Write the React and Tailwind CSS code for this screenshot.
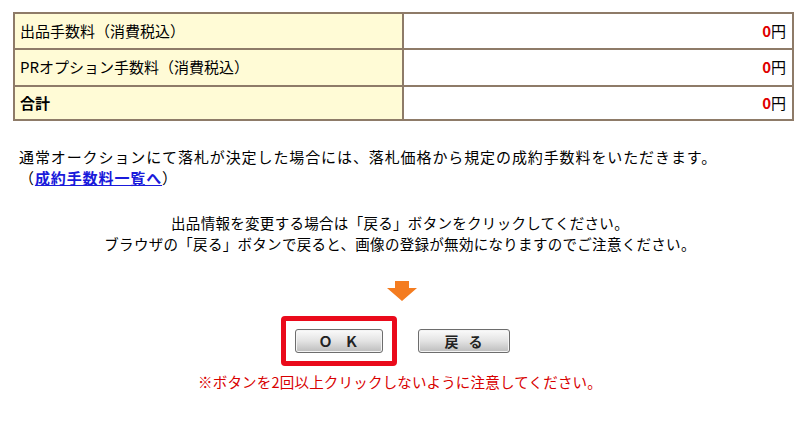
const jp = { fontFamily: '"Noto Sans CJK JP", "Noto Sans", sans-serif' };

function FeeRow({ label, bold, h }) {
  return (
    <tr className={h}>
      <td className="w-[389px] border-2 border-[#8e7b68] bg-[#fffbd6] pl-[5px] align-middle">
        <span className={bold ? 'font-bold' : ''}>{label}</span>
      </td>
      <td className="border-2 border-[#8e7b68] bg-white pr-[6px] text-right align-middle">
        <span className="font-bold text-[#e00000]">0</span>円
      </td>
    </tr>
  );
}

function GrayButton({ children, className }) {
  return (
    <button
      className={`flex h-[24px] items-center justify-center rounded-[3px] border border-[#6d6d6d] bg-gradient-to-b from-[#fbfbfb] via-[#e3e3e3] to-[#bcbcbc] text-[14px] font-bold text-[#222] shadow-[inset_0_0_0_1px_#f4f4f4] ${className}`}
    >
      {children}
    </button>
  );
}

export default function App() {
  return (
    <div className="h-[430px] w-[800px] bg-white text-[15px] text-black" style={jp}>
      <div className="pl-[13px] pt-[12px]">
        <table className="w-[781px] border-collapse">
          <tbody>
            <FeeRow label="出品手数料（消費税込）" h="h-[36px]" />
            <FeeRow label="PRオプション手数料（消費税込）" h="h-[37px]" />
            <FeeRow label="合計" bold h="h-[34px]" />
          </tbody>
        </table>
      </div>

      <div className="mt-[25px] pl-[19px] text-[15px] leading-[21px] tracking-[0.9px]">
        <p>通常オークションにて落札が決定した場合には、落札価格から規定の成約手数料をいただきます。</p>
        <p>
          （<a className="font-bold text-[#1a1adb] underline">成約手数料一覧へ</a>）
        </p>
      </div>

      <div className="mt-[24px] text-center text-[14.5px] leading-[21px] tracking-[0.3px]">
        <p>出品情報を変更する場合は「戻る」ボタンをクリックしてください。</p>
        <p>ブラウザの「戻る」ボタンで戻ると、画像の登録が無効になりますのでご注意ください。</p>
      </div>

      <div className="mt-[27px] flex justify-center pl-[3px]">
        <svg width="30" height="20" viewBox="0 0 30 20">
          <path d="M8 0 H22 V7 H30 L15 20 L0 7 H8 Z" fill="#f47c20" />
        </svg>
      </div>

      <div className="mt-[15px] flex items-center justify-center gap-[21px] pr-[10px]">
        <div className="rounded-[4px] border-[5px] border-[#ea0a1b] px-[9px] py-[8px]">
          <GrayButton className="w-[88px] tracking-[12px] pl-[12px]">ＯＫ</GrayButton>
        </div>
        <GrayButton className="w-[92px] tracking-[10px] pl-[10px]">戻る</GrayButton>
      </div>

      <p className="mt-[5px] text-center text-[14.5px] tracking-[0.2px] text-[#d80000]">
        ※ボタンを2回以上クリックしないように注意してください。
      </p>
    </div>
  );
}
